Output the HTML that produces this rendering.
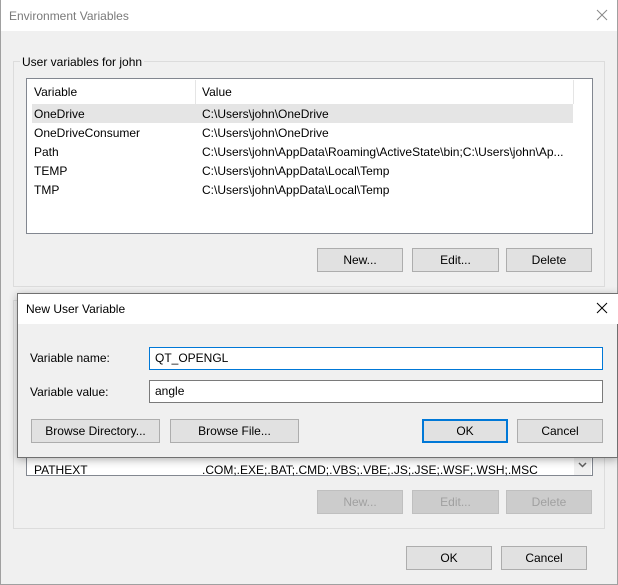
<!DOCTYPE html>
<html><head><style>
*{margin:0;padding:0;box-sizing:border-box}
body{width:618px;height:585px;background:#fff;font-family:"Liberation Sans",sans-serif;font-size:12px;color:#000;position:relative;overflow:hidden}
.a{position:absolute}
.btn{position:absolute;background:#e1e1e1;border:1px solid #adadad;text-align:center;line-height:23px;height:24px}
.dis{color:#a0a0a0;background:#ccc;border-color:#bfbfbf}
.t{position:absolute;white-space:nowrap}
</style></head><body>
<div class="a" style="left:0;top:0;width:618px;height:585px;border:1px solid #a0a0a0;border-top:none;background:#f0f0f0"></div>
<div class="a" style="left:0;top:0;width:617px;height:31px;background:#fff;border-left:1px solid #a0a0a0"></div>
<div class="t" style="left:9px;top:9px;color:#7a7a7a">Environment Variables</div>
<svg class="a" style="left:596px;top:9px" width="12" height="12"><path d="M1 1L11 11M11 1L1 11" stroke="#888" stroke-width="1"/></svg>
<div class="a" style="left:13px;top:61px;width:592px;height:226px;border:1px solid #dcdcdc"></div>
<div class="t" style="left:20px;top:55px;background:#f0f0f0;padding:0 2px">User variables for john</div>
<div class="a" style="left:26px;top:78px;width:567px;height:156px;border:1px solid #828790;background:#fff"></div>
<div class="a" style="left:195px;top:80px;width:1px;height:24px;background:#e5e5e5"></div>
<div class="a" style="left:573px;top:80px;width:1px;height:24px;background:#e5e5e5"></div>
<div class="t" style="left:34px;top:85px">Variable</div>
<div class="t" style="left:202px;top:85px">Value</div>
<div class="a" style="left:32px;top:104px;width:541px;height:19px;background:#e5e5e5"></div>
<div class="t" style="left:34px;top:107px">OneDrive</div><div class="t" style="left:202px;top:107px">C:\Users\john\OneDrive</div>
<div class="t" style="left:34px;top:126px">OneDriveConsumer</div><div class="t" style="left:202px;top:126px">C:\Users\john\OneDrive</div>
<div class="t" style="left:34px;top:145px">Path</div><div class="t" style="left:202px;top:145px">C:\Users\john\AppData\Roaming\ActiveState\bin;C:\Users\john\Ap...</div>
<div class="t" style="left:34px;top:164px">TEMP</div><div class="t" style="left:202px;top:164px">C:\Users\john\AppData\Local\Temp</div>
<div class="t" style="left:34px;top:183px">TMP</div><div class="t" style="left:202px;top:183px">C:\Users\john\AppData\Local\Temp</div>
<div class="btn" style="left:317px;top:248px;width:86px">New...</div>
<div class="btn" style="left:412px;top:248px;width:87px">Edit...</div>
<div class="btn" style="left:506px;top:248px;width:86px">Delete</div>
<div class="a" style="left:13px;top:300px;width:592px;height:229px;border:1px solid #dcdcdc"></div>
<div class="a" style="left:26px;top:320px;width:567px;height:156px;border:1px solid #828790;background:#fff"></div>
<div class="t" style="left:34px;top:463px">PATHEXT</div><div class="t" style="left:202px;top:463px">.COM;.EXE;.BAT;.CMD;.VBS;.VBE;.JS;.JSE;.WSF;.WSH;.MSC</div>
<div class="a" style="left:574px;top:455px;width:17px;height:20px;background:#f0f0f0"></div>
<svg class="a" style="left:578px;top:462px" width="9" height="6"><path d="M1 1L4.5 4.5L8 1" stroke="#606060" stroke-width="1.5" fill="none"/></svg>
<div class="btn dis" style="left:317px;top:490px;width:86px">New...</div>
<div class="btn dis" style="left:412px;top:490px;width:87px">Edit...</div>
<div class="btn dis" style="left:506px;top:490px;width:86px">Delete</div>
<div class="btn" style="left:406px;top:546px;width:86px">OK</div>
<div class="btn" style="left:501px;top:546px;width:86px">Cancel</div>
<div class="a" style="left:17px;top:293px;width:601px;height:165px;border:1px solid #707070;background:#f0f0f0;box-shadow:0 2px 8px rgba(0,0,0,.3)"></div>
<div class="a" style="left:18px;top:294px;width:600px;height:30px;background:#fff"></div>
<div class="t" style="left:26px;top:302px">New User Variable</div>
<svg class="a" style="left:596px;top:302px" width="12" height="12"><path d="M1 1L11 11M11 1L1 11" stroke="#000" stroke-width="1"/></svg>
<div class="t" style="left:30px;top:351px">Variable name:</div>
<div class="t" style="left:30px;top:385px">Variable value:</div>
<div class="a" style="left:149px;top:347px;width:454px;height:23px;border:1px solid #0078d7;background:#fff"></div>
<div class="t" style="left:155px;top:351px">QT_OPENGL</div>
<div class="a" style="left:149px;top:380px;width:454px;height:23px;border:1px solid #7a7a7a;background:#fff"></div>
<div class="t" style="left:155px;top:384px">angle</div>
<div class="btn" style="left:31px;top:419px;width:129px">Browse Directory...</div>
<div class="btn" style="left:170px;top:419px;width:129px">Browse File...</div>
<div class="btn" style="left:422px;top:419px;width:86px;border:2px solid #0078d7;line-height:21px">OK</div>
<div class="btn" style="left:517px;top:419px;width:86px">Cancel</div>
</body></html>
